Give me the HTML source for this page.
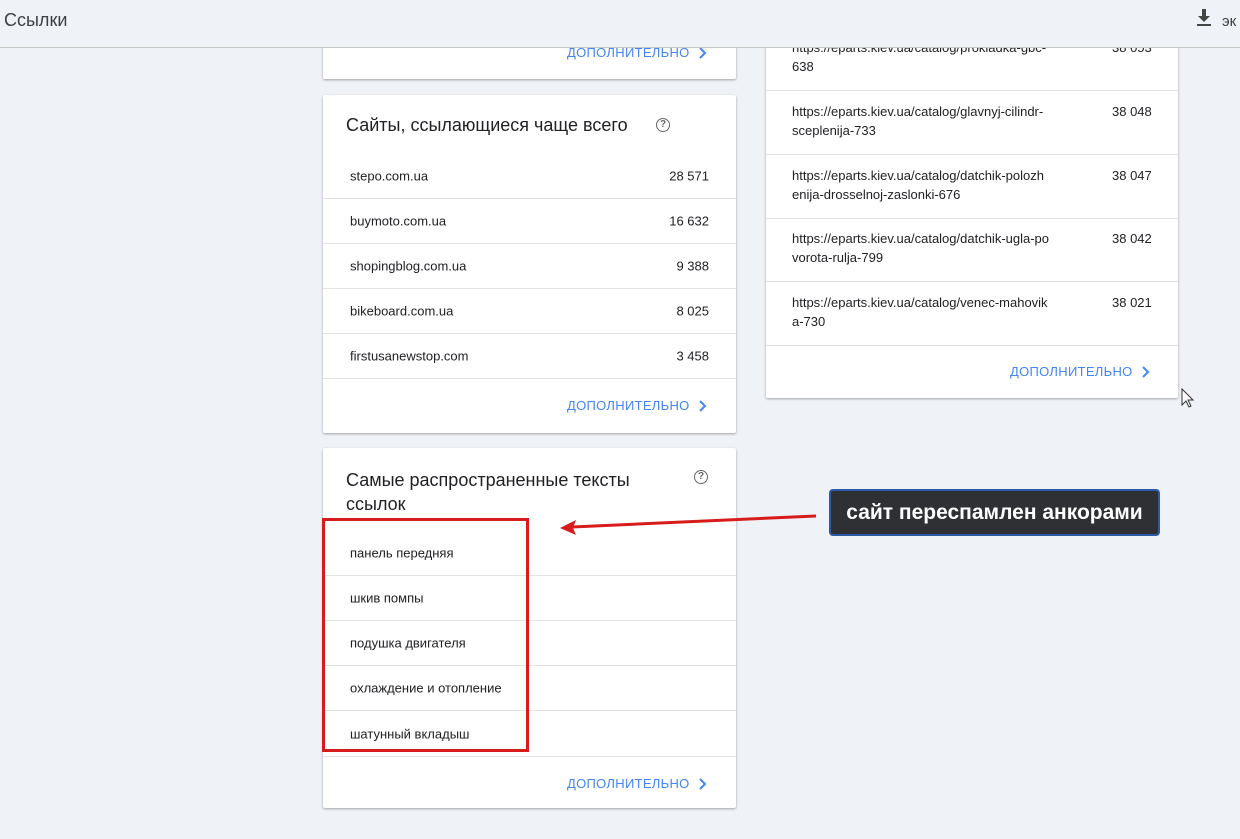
<!DOCTYPE html>
<html><head><meta charset="utf-8"><style>
*{box-sizing:border-box;margin:0;padding:0}
body{width:1240px;height:839px;background:#eff2f7;font-family:"Liberation Sans",sans-serif;position:relative;overflow:hidden;color:#202124}
.hdr{position:absolute;left:0;top:0;width:1240px;height:48px;border-bottom:1px solid #c8c8c8;background:#eff2f7;z-index:5}
.hdr .t{position:absolute;left:4px;top:10px;font-size:18px;color:#3c4043}
.card{position:absolute;background:#fff;border-radius:2px;box-shadow:0 1px 2px rgba(0,0,0,.25),0 1px 3px rgba(0,0,0,.1)}
.row{position:absolute;left:0;right:0;border-bottom:1px solid #e3e3e3;font-size:13px}
.row span{position:absolute;top:50%;transform:translateY(-50%)}
.more{position:absolute;font-size:13px;color:#4285f4;letter-spacing:.3px}
.more svg{position:absolute;left:131px;top:1px}
.q{position:absolute;width:14px;height:14px;border:1.5px solid #666;border-radius:50%;font-size:10px;text-align:center;line-height:11px;color:#666;font-weight:bold}
.title{position:absolute;font-size:18px;color:#202124}
.u{position:absolute;left:26px;font-size:13px;line-height:19px;color:#202124}
.n{position:absolute;left:346px;font-size:13px}
</style></head><body>
<div class="hdr"><div class="t">Ссылки</div>
<svg style="position:absolute;left:1197px;top:9px" width="14" height="18" viewBox="0 0 14 18"><path d="M5 0h4v7h4l-6 6-6-6h4z" fill="#444"/><rect x="0" y="15" width="14" height="2" fill="#444"/></svg>
<div style="position:absolute;left:1222px;top:13px;font-size:15px;color:#3c4043">эк</div></div>

<div class="card" style="left:323px;top:30px;width:413px;height:49px;border-radius:0 0 2px 2px">
<div class="more" style="left:244px;top:15px">ДОПОЛНИТЕЛЬНО<svg width="10" height="14" viewBox="0 0 10 14"><path d="M2 2l5 5-5 5" fill="none" stroke="#4285f4" stroke-width="2"/></svg></div></div>

<div class="card" style="left:766px;top:30px;width:412px;height:368px;border-radius:0 0 2px 2px">
<div class="u" style="top:8px">https://eparts.kiev.ua/catalog/prokladka-gbc-<br>638</div><div class="n" style="top:10px">38 053</div>
<div class="row" style="top:0;height:61px"></div>
<div class="u" style="top:72px">https://eparts.kiev.ua/catalog/glavnyj-cilindr-<br>sceplenija-733</div><div class="n" style="top:74px">38 048</div>
<div class="row" style="top:61px;height:64px"></div>
<div class="u" style="top:136px">https://eparts.kiev.ua/catalog/datchik-polozh<br>enija-drosselnoj-zaslonki-676</div><div class="n" style="top:138px">38 047</div>
<div class="row" style="top:125px;height:64px"></div>
<div class="u" style="top:199px">https://eparts.kiev.ua/catalog/datchik-ugla-po<br>vorota-rulja-799</div><div class="n" style="top:201px">38 042</div>
<div class="row" style="top:189px;height:63px"></div>
<div class="u" style="top:263px">https://eparts.kiev.ua/catalog/venec-mahovik<br>a-730</div><div class="n" style="top:265px">38 021</div>
<div class="row" style="top:252px;height:64px"></div>
<div class="more" style="left:244px;top:334px">ДОПОЛНИТЕЛЬНО<svg width="10" height="14" viewBox="0 0 10 14"><path d="M2 2l5 5-5 5" fill="none" stroke="#4285f4" stroke-width="2"/></svg></div></div>

<div class="card" style="left:323px;top:95px;width:413px;height:338px">
<div class="title" style="left:23px;top:20px">Сайты, ссылающиеся чаще всего</div>
<div class="q" style="left:333px;top:23px">?</div>
<div class="row" style="top:58px;height:46px"><span style="left:27px">stepo.com.ua</span><span style="right:27px">28 571</span></div>
<div class="row" style="top:104px;height:45px"><span style="left:27px">buymoto.com.ua</span><span style="right:27px">16 632</span></div>
<div class="row" style="top:149px;height:45px"><span style="left:27px">shopingblog.com.ua</span><span style="right:27px">9 388</span></div>
<div class="row" style="top:194px;height:45px"><span style="left:27px">bikeboard.com.ua</span><span style="right:27px">8 025</span></div>
<div class="row" style="top:239px;height:45px"><span style="left:27px">firstusanewstop.com</span><span style="right:27px">3 458</span></div>
<div class="more" style="left:244px;top:303px">ДОПОЛНИТЕЛЬНО<svg width="10" height="14" viewBox="0 0 10 14"><path d="M2 2l5 5-5 5" fill="none" stroke="#4285f4" stroke-width="2"/></svg></div></div>

<div class="card" style="left:323px;top:448px;width:413px;height:360px">
<div class="title" style="left:23px;top:20px;line-height:24px">Самые распространенные тексты<br>ссылок</div>
<div class="q" style="left:371px;top:22px">?</div>
<div class="row" style="top:82px;height:46px"><span style="left:27px">панель передняя</span></div>
<div class="row" style="top:128px;height:45px"><span style="left:27px">шкив помпы</span></div>
<div class="row" style="top:173px;height:45px"><span style="left:27px">подушка двигателя</span></div>
<div class="row" style="top:218px;height:45px"><span style="left:27px">охлаждение и отопление</span></div>
<div class="row" style="top:263px;height:46px"><span style="left:27px">шатунный вкладыш</span></div>
<div class="more" style="left:244px;top:328px">ДОПОЛНИТЕЛЬНО<svg width="10" height="14" viewBox="0 0 10 14"><path d="M2 2l5 5-5 5" fill="none" stroke="#4285f4" stroke-width="2"/></svg></div></div>

<div style="position:absolute;left:322px;top:518px;width:207px;height:234px;border:3px solid #d81b1b"></div>
<svg style="position:absolute;left:0;top:0" width="1240" height="839"><line x1="816" y1="516" x2="572" y2="527" stroke="#d81b1b" stroke-width="3"/><path d="M560 528 L576 520 L573 528 L576 535 Z" fill="#d81b1b"/>
<path d="M1182 389 v16 l4-4 3 6 2-1-3-6 5 0z" fill="#fff" stroke="#333" stroke-width="1"/></svg>
<div style="position:absolute;left:829px;top:489px;width:331px;height:47px;background:#2f3033;border:2px solid #2b5aa8;border-radius:4px;color:#fff;font-family:'Liberation Sans',sans-serif;font-weight:bold;font-size:21px;line-height:43px;text-align:center;white-space:nowrap">сайт переспамлен анкорами</div>
</body></html>
